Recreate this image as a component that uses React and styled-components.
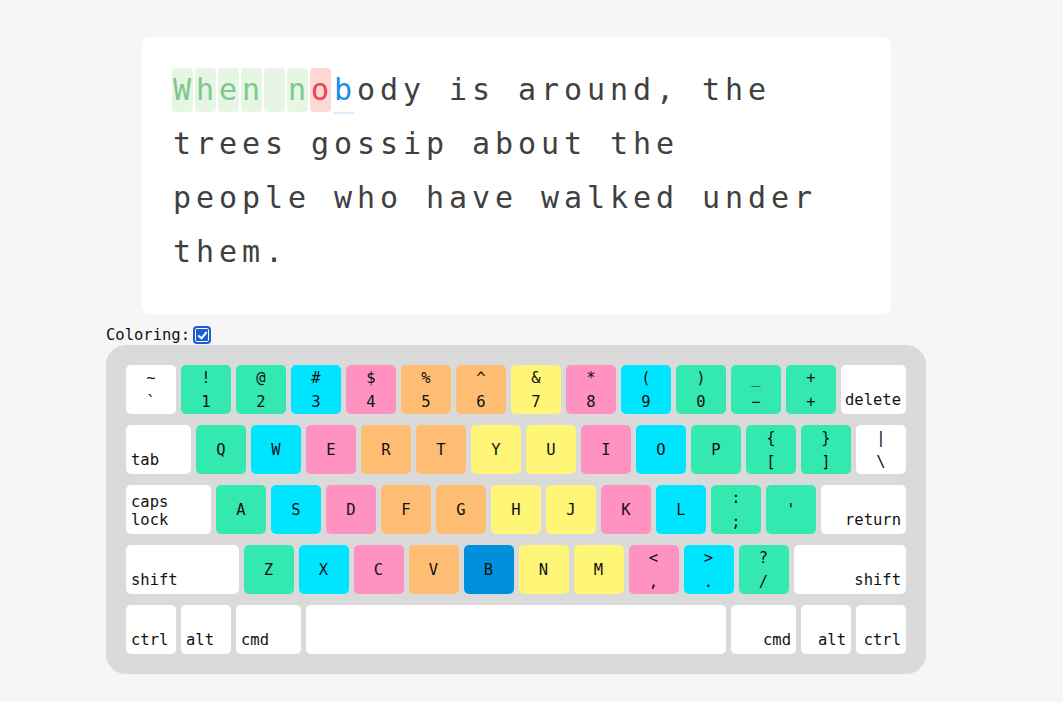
import React, { useState } from "react";
import styled, { createGlobalStyle, css } from "styled-components";

const GlobalStyle = createGlobalStyle`
  html, body {
    margin: 0;
    padding: 0;
    background: #f6f6f6;
  }
  * {
    box-sizing: border-box;
  }
`;

const TEXT = "When nobody is around, the trees gossip about the people who have walked under them.";
const TYPED = "When no";
const WRONG = [6];

const GREEN = "#33e9b0";
const CYAN = "#00e5ff";
const PINK = "#ff92c1";
const ORANGE = "#ffbd73";
const YELLOW = "#fff576";
const WHITE = "#ffffff";
const ACTIVE = "#0090db";

const ROWS = [
  [
    { top: "~", bottom: "`" },
    { top: "!", bottom: "1", color: GREEN },
    { top: "@", bottom: "2", color: GREEN },
    { top: "#", bottom: "3", color: CYAN },
    { top: "$", bottom: "4", color: PINK },
    { top: "%", bottom: "5", color: ORANGE },
    { top: "^", bottom: "6", color: ORANGE },
    { top: "&", bottom: "7", color: YELLOW },
    { top: "*", bottom: "8", color: PINK },
    { top: "(", bottom: "9", color: CYAN },
    { top: ")", bottom: "0", color: GREEN },
    { top: "_", bottom: "−", color: GREEN },
    { top: "+", bottom: "+", color: GREEN },
    { mod: "delete", width: 65, align: "right" },
  ],
  [
    { mod: "tab", width: 65 },
    { label: "Q", color: GREEN },
    { label: "W", color: CYAN },
    { label: "E", color: PINK },
    { label: "R", color: ORANGE },
    { label: "T", color: ORANGE },
    { label: "Y", color: YELLOW },
    { label: "U", color: YELLOW },
    { label: "I", color: PINK },
    { label: "O", color: CYAN },
    { label: "P", color: GREEN },
    { top: "{", bottom: "[", color: GREEN },
    { top: "}", bottom: "]", color: GREEN },
    { top: "|", bottom: "\\" },
  ],
  [
    { mod: "caps\nlock", width: 85 },
    { label: "A", color: GREEN },
    { label: "S", color: CYAN },
    { label: "D", color: PINK },
    { label: "F", color: ORANGE },
    { label: "G", color: ORANGE },
    { label: "H", color: YELLOW },
    { label: "J", color: YELLOW },
    { label: "K", color: PINK },
    { label: "L", color: CYAN },
    { top: ":", bottom: ";", color: GREEN },
    { label: "'", color: GREEN },
    { mod: "return", width: 85, align: "right" },
  ],
  [
    { mod: "shift", width: 112.5 },
    { label: "Z", color: GREEN },
    { label: "X", color: CYAN },
    { label: "C", color: PINK },
    { label: "V", color: ORANGE },
    { label: "B", color: ORANGE, active: true },
    { label: "N", color: YELLOW },
    { label: "M", color: YELLOW },
    { top: "<", bottom: ",", color: PINK },
    { top: ">", bottom: ".", color: CYAN },
    { top: "?", bottom: "/", color: GREEN },
    { mod: "shift", width: 112.5, align: "right" },
  ],
  [
    { mod: "ctrl" },
    { mod: "alt" },
    { mod: "cmd", width: 65 },
    { mod: "", width: 420 },
    { mod: "cmd", width: 65, align: "right" },
    { mod: "alt", align: "right" },
    { mod: "ctrl", align: "right" },
  ],
];

const Page = styled.div`
  width: 820px;
  margin-left: 106px;
  padding-top: 37px;
`;

const Card = styled.div`
  width: 749px;
  margin: 0 auto;
  background: #fff;
  border-radius: 8px;
  padding: 26px 49px 35px 30px;
`;

const Prompt = styled.div`
  width: 670px;
  display: flex;
  flex-wrap: wrap;
  font-family: "DejaVu Sans Mono", "Liberation Mono", monospace;
  font-size: 30px;
  line-height: 54px;
  color: #404040;
`;

const Word = styled.span`
  white-space: pre;
  display: inline-flex;
  align-items: center;
  height: 54px;
`;

const stateStyles = {
  correct: css`
    color: #7cc98e;
    background: #e7f6e4;
  `,
  wrong: css`
    color: #e8444f;
    background: #fdd8d5;
  `,
  current: css`
    color: #1b8fe0;
    border-radius: 0;
    box-shadow: 0 2px 0 #dcebf8;
  `,
  pending: css``,
};

const Char = styled.span`
  display: inline-block;
  width: 21px;
  height: 44px;
  line-height: 44px;
  margin-right: 2px;
  text-align: center;
  border-radius: 4px;
  ${({ $state }) => stateStyles[$state]}
`;

const OptionRow = styled.label`
  display: flex;
  align-items: center;
  height: 18px;
  margin: 12px 0 1px;
  font-family: "DejaVu Sans Mono", "Liberation Mono", monospace;
  font-size: 15.5px;
  color: #111;
`;

const CheckBox = styled.span`
  display: inline-flex;
  align-items: center;
  justify-content: center;
  width: 18px;
  height: 18px;
  margin-left: 3px;
  border-radius: 4px;
  background: #1c5fd2;
  border: 2px solid #1c5fd2;
  box-shadow: inset 0 0 0 1px #fff;
`;

const Keyboard = styled.div`
  width: 820px;
  background: #dadada;
  border-radius: 20px;
  padding: 20px;
  display: flex;
  flex-direction: column;
  gap: 11px;
`;

const Row = styled.div`
  display: flex;
  gap: 5px;
`;

const Key = styled.div`
  flex: none;
  width: ${({ $width }) => $width || 50}px;
  height: 49px;
  border-radius: 5px;
  background: ${({ $color }) => $color};
  font-family: "DejaVu Sans Mono", "Liberation Mono", monospace;
  font-size: 15.5px;
  color: #111;
  display: flex;
  flex-direction: column;
  ${({ $kind, $align }) =>
    $kind === "mod"
      ? css`
          justify-content: flex-end;
          align-items: ${$align === "right" ? "flex-end" : "flex-start"};
          text-align: ${$align === "right" ? "right" : "left"};
          padding: 5px;
          line-height: 18px;
          white-space: pre;
        `
      : css`
          justify-content: center;
          align-items: center;
          line-height: 24px;
        `}
`;

function keyState(i) {
  if (i < TYPED.length) return WRONG.includes(i) ? "wrong" : "correct";
  if (i === TYPED.length) return "current";
  return "pending";
}

function PromptText() {
  let index = 0;
  const words = TEXT.split(" ").map((w, wi, all) => {
    const chars = wi < all.length - 1 ? w + " " : w;
    return (
      <Word key={wi}>
        {chars.split("").map((c) => {
          const i = index++;
          return (
            <Char key={i} $state={keyState(i)}>
              {c}
            </Char>
          );
        })}
      </Word>
    );
  });
  return <Prompt>{words}</Prompt>;
}

function KeyCap({ k, coloring }) {
  const color = !coloring ? WHITE : k.active ? ACTIVE : k.color || WHITE;
  if (k.mod !== undefined) {
    return (
      <Key $kind="mod" $align={k.align} $width={k.width} $color={color}>
        {k.mod}
      </Key>
    );
  }
  return (
    <Key $width={k.width} $color={color}>
      {k.label ? (
        <span>{k.label}</span>
      ) : (
        <>
          <span>{k.top}</span>
          <span>{k.bottom}</span>
        </>
      )}
    </Key>
  );
}

export default function App() {
  const [coloring, setColoring] = useState(true);

  return (
    <Page>
      <GlobalStyle />
      <Card>
        <PromptText />
      </Card>
      <OptionRow onClick={() => setColoring(!coloring)}>
        Coloring:
        <CheckBox>
          {coloring && (
            <svg width="11" height="11" viewBox="0 0 12 12">
              <path d="M2 6.5 L5 9.2 L10 2.8" fill="none" stroke="#fff" strokeWidth="2.2" strokeLinecap="round" strokeLinejoin="round" />
            </svg>
          )}
        </CheckBox>
      </OptionRow>
      <Keyboard>
        {ROWS.map((row, ri) => (
          <Row key={ri}>
            {row.map((k, ki) => (
              <KeyCap key={ki} k={k} coloring={coloring} />
            ))}
          </Row>
        ))}
      </Keyboard>
    </Page>
  );
}
